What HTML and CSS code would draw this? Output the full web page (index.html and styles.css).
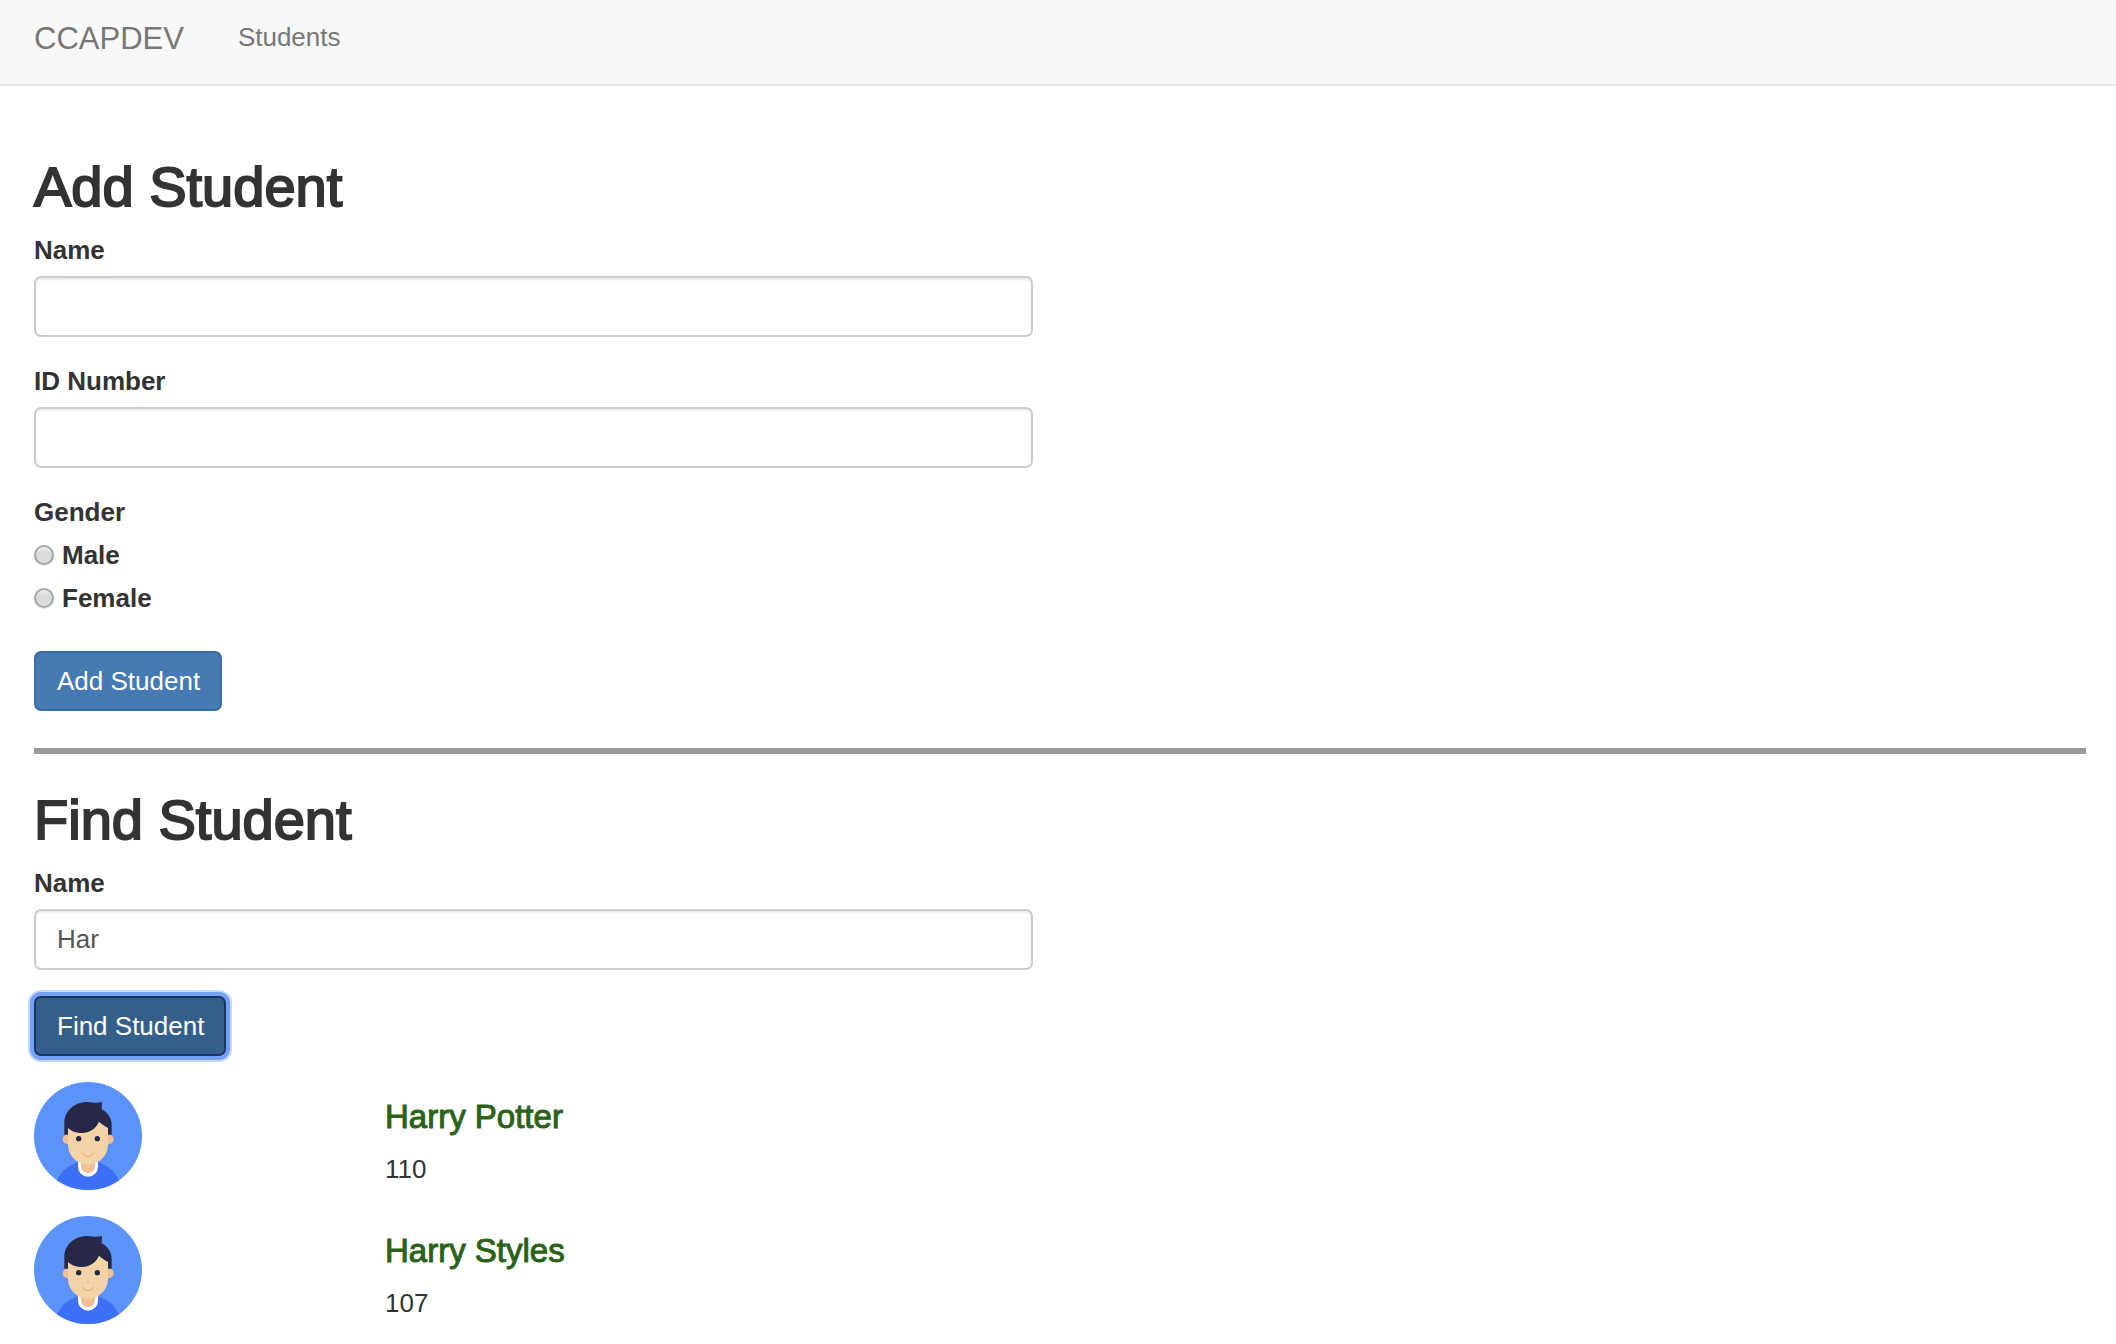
FILE: index.html
```html
<!DOCTYPE html>
<html lang="en">
<head>
  <meta charset="utf-8">
  <meta name="viewport" content="width=device-width, initial-scale=1">
  <title>Students</title>
  <link rel="stylesheet" href="styles.css">
</head>
<body>
  <svg class="sprite" aria-hidden="true">
    <symbol id="avatar" viewBox="0 0 324 324">
      <rect width="324" height="324" fill="#5c93f8"/>
      <circle cx="162" cy="340" r="104" fill="#3d6ff7"/>
      <path d="M132 236V254a30 30 0 0 0 60 0V236Z" fill="#fff"/>
      <path d="M141 228V252a21 21 0 0 0 42 0V228Z" fill="#efbf95"/>
      <circle cx="101" cy="172" r="15" fill="#efbf95"/>
      <circle cx="224" cy="172" r="15" fill="#efbf95"/>
      <path d="M102 110H222V188A60 60 0 0 1 102 188Z" fill="#f4d3a7"/>
      <path d="M91 158V122C91 86 124 59 160 60C176 62 190 63 204 60L203 82C221 92 233 108 233 128V158H222V138C211 132 203 126 195 119C186 141 165 152 145 153C127 153 111 147 102 138V158Z" fill="#272848"/>
      <circle cx="134" cy="170" r="8" fill="#272848"/>
      <circle cx="190" cy="170" r="8" fill="#272848"/>
      <path d="M157 198Q162 202 167 198" fill="none" stroke="#efbf95" stroke-width="3"/>
      <path d="M144 212Q162 236 180 212" fill="none" stroke="#ecb38c" stroke-width="4"/>
    </symbol>
  </svg>

  <nav class="navbar">
    <a class="brand" href="#">CCAPDEV</a>
    <a class="nav-link" href="#">Students</a>
  </nav>

  <main class="page">
    <section>
      <h2 class="title">Add Student</h2>
      <form class="form">
        <div class="field">
          <label class="label" for="add-name">Name</label>
          <input class="input" id="add-name" type="text">
        </div>
        <div class="field">
          <label class="label" for="add-id">ID Number</label>
          <input class="input" id="add-id" type="text">
        </div>
        <fieldset class="choices">
          <legend class="label">Gender</legend>
          <label class="label choice"><input class="radio" type="radio" name="gender" value="M">Male</label>
          <label class="label choice"><input class="radio" type="radio" name="gender" value="F">Female</label>
        </fieldset>
        <button class="button button-add" type="button">Add Student</button>
      </form>
    </section>

    <hr class="divider">

    <section>
      <h2 class="title">Find Student</h2>
      <form class="form">
        <div class="field">
          <label class="label" for="find-name">Name</label>
          <input class="input" id="find-name" type="text" value="Har">
        </div>
        <button class="button button-active" type="button">Find Student</button>
      </form>
      <div class="results">
        <article class="student">
          <svg class="avatar" role="img" aria-label="Harry Potter"><use href="#avatar"/></svg>
          <div class="details">
            <h4 class="name">Harry Potter</h4>
            <p class="number">110</p>
          </div>
        </article>
        <article class="student">
          <svg class="avatar" role="img" aria-label="Harry Styles"><use href="#avatar"/></svg>
          <div class="details">
            <h4 class="name">Harry Styles</h4>
            <p class="number">107</p>
          </div>
        </article>
      </div>
    </section>
  </main>
</body>
</html>
```
FILE: styles.css
```css
* {
  box-sizing: border-box;
}

body {
  margin: 0;
  background: #fff;
  color: #333;
  font: 26px/36px "Helvetica Neue", "Liberation Sans", Arial, sans-serif;
}

.sprite {
  display: none;
}

.navbar {
  display: flex;
  align-items: flex-start;
  gap: 54px;
  padding: 20px 34px 26px;
  background: #f8f8f8;
  border-bottom: 2px solid #e7e7e7;
}

.brand,
.nav-link {
  color: #777;
  text-decoration: none;
}

.brand {
  font-size: 31px;
  line-height: 38px;
}

.nav-link {
  line-height: 34px;
}

.page {
  padding: 71px 30px 20px 34px;
}

.title {
  margin: 0 0 15px;
  font-size: 56px;
  font-weight: 400;
  line-height: 60px;
  -webkit-text-stroke: 2px currentColor;
}

.form {
  display: grid;
  grid-template-columns: 1fr 1fr;
  column-gap: 54px;
  row-gap: 26px;
}

.form > * {
  grid-column: 1;
}

.field {
  display: flex;
  flex-direction: column;
  gap: 8px;
}

.label {
  padding: 0;
  font-weight: 700;
}

.input {
  width: 100%;
  height: 61px;
  padding: 0 21px;
  border: 2px solid #ccc;
  border-radius: 7px;
  background: #fff;
  box-shadow: inset 0 2px 2px rgba(0, 0, 0, 0.075);
  color: #555;
  font: inherit;
}

.choices {
  margin: 0;
  padding: 0;
  border: 0;
}

.choice {
  display: flex;
  align-items: center;
  gap: 8px;
  margin-top: 7px;
}

.radio {
  appearance: none;
  width: 20px;
  height: 20px;
  margin: 0;
  border: 2px solid #a6a6a6;
  border-radius: 50%;
  background: linear-gradient(#ececec, #dadada 40%, #dedede);
  box-shadow: 0 1px 1px rgba(0, 0, 0, 0.12);
}

.button {
  justify-self: start;
  height: 60px;
  padding: 0 20px 0 21px;
  border: 2px solid #3a6ca5;
  border-radius: 7px;
  background: #467ab3;
  color: #fff;
  font: inherit;
}

.button-add {
  margin-top: 9px;
}

.button-active {
  border-color: #1b3660;
  background: #355f8b;
  box-shadow: 0 0 0 4px #76a1f8, 0 0 0 6px #c6d8fb;
}

.divider {
  height: 6px;
  margin: 37px 0 36px;
  border: 0;
  background: #999;
}

.results {
  display: flex;
  flex-direction: column;
  gap: 26px;
  margin-top: 26px;
}

.student {
  display: grid;
  grid-template-columns: repeat(6, 1fr);
  column-gap: 54px;
}

.avatar {
  width: 108px;
  height: 108px;
  border-radius: 50%;
}

.details {
  grid-column: 2 / -1;
  display: flex;
  flex-direction: column;
  gap: 16px;
  padding-top: 17px;
}

.name,
.number {
  margin: 0;
}

.name {
  color: #2a6218;
  font-size: 33px;
  font-weight: 400;
  -webkit-text-stroke: 1px currentColor;
}
```
